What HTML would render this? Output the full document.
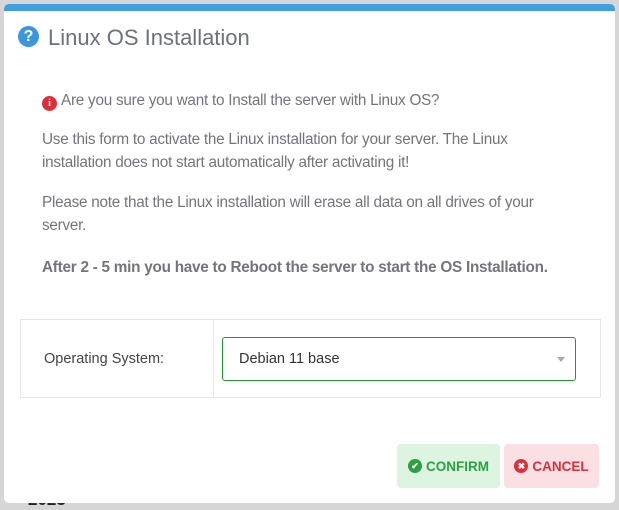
<!DOCTYPE html>
<html><head><style>
body{margin:0;width:619px;height:507px;background:#d6d6d6;font-family:"Liberation Sans",sans-serif;position:relative;overflow:hidden}
.bg{position:absolute;left:28px;top:490px;font-weight:bold;font-size:17px;color:#222}
.m{position:absolute;left:4px;top:4px;width:611px;height:499px;background:#fff;border-radius:5px;overflow:hidden}
.bar{height:7px;background:#3f9fdf}
.t{position:absolute;left:44px;top:21px;font-size:22px;color:#6c717b}
.q{position:absolute;left:14px;top:22px;width:21px;height:21px;border-radius:50%;background:#3a97dc;color:#fff;font-weight:bold;font-size:16px;text-align:center;line-height:21px}
p{position:absolute;left:38px;margin:0;font-size:15.3px;color:#71757e;line-height:23px;white-space:nowrap;letter-spacing:-0.25px}
.i{display:inline-block;width:15px;height:15px;border-radius:50%;background:#dc2f3a;color:#fff;font-size:10px;font-weight:bold;text-align:center;line-height:15px;vertical-align:-1px;margin-right:4px;font-family:"Liberation Serif",serif;letter-spacing:0}
.tb{position:absolute;left:16px;top:315px;width:579px;height:77px;border:1px solid #e6e6e6}
.dv{position:absolute;left:192px;top:0;width:1px;height:77px;background:#e6e6e6}
.lb{position:absolute;left:23px;top:31px;font-size:14.5px;color:#444}
.sel{position:absolute;left:201px;top:17px;width:352px;height:42px;border:1px solid #1f9a2e;border-radius:3px}
.sel span{position:absolute;left:16px;top:13px;font-size:14.5px;color:#333}
.ar{position:absolute;right:10px;top:19px;border:4px solid transparent;border-top:5px solid #aaa;border-bottom:0}
.b{position:absolute;top:440px;height:44px;border-radius:4px;font-weight:bold;font-size:13.5px;display:flex;align-items:center;justify-content:center}
.c{left:393px;width:103px;background:#dcf4e0;color:#2ea043}
.x{left:500px;width:95px;background:#fae0e2;color:#d9303e}
.ic{display:inline-block;width:14px;height:14px;border-radius:50%;color:#fff;font-size:9px;line-height:14px;text-align:center;margin-right:4px}
</style></head><body>
<div class="bg">2023</div>
<div class="m"><div class="bar"></div>
<div class="q">?</div><div class="t">Linux OS Installation</div>
<p style="top:85px"><span class="i">i</span>Are you sure you want to Install the server with Linux OS?</p>
<p style="top:124px">Use this form to activate the Linux installation for your server. The Linux<br>installation does not start automatically after activating it!</p>
<p style="top:187px">Please note that the Linux installation will erase all data on all drives of your<br>server.</p>
<p style="top:252px;font-weight:bold">After 2 - 5 min you have to Reboot the server to start the OS Installation.</p>
<div class="tb"><div class="dv"></div><div class="lb">Operating System:</div>
<div class="sel"><span>Debian 11 base</span><div class="ar"></div></div></div>
<div class="b c"><span class="ic" style="background:#2ea043">✔</span>CONFIRM</div>
<div class="b x"><span class="ic" style="background:#d9303e">✖</span>CANCEL</div>
</div>
</body></html>
